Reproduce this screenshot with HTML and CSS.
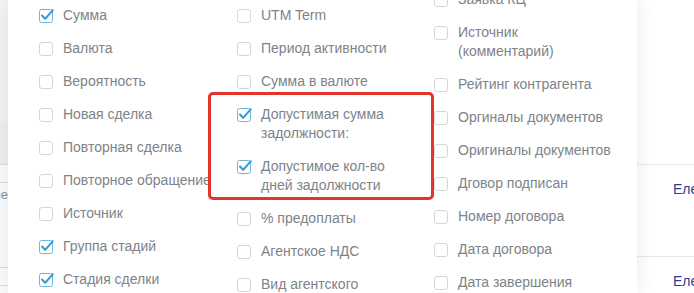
FILE: index.html
```html
<!DOCTYPE html>
<html lang="ru">
<head>
    <meta charset="UTF-8">
    <meta name="viewport" content="width=device-width, initial-scale=1.0">
    <title>Поля сделки</title>
    <link rel="stylesheet" href="styles.css">
</head>
<body>
    <div class="page">
        <div class="side-left">
            <div class="sl-head"></div>
            <div class="sl-band"></div>
            <div class="sl-row short"></div>
            <div class="sl-row tall"><span class="cut">ние</span></div>
            <div class="sl-row short"></div>
        </div>

        <div class="popup">
            <div class="col">
                <label class="item"><svg class="box" viewBox="0 0 14 14"><rect x="0.5" y="0.5" width="13" height="13" rx="2"/><path d="M3 6.5 L6.2 9.8 L13.8 1.2"/></svg><span class="label">Сумма</span></label>
                <label class="item"><span class="box empty"></span><span class="label">Валюта</span></label>
                <label class="item"><span class="box empty"></span><span class="label">Вероятность</span></label>
                <label class="item"><span class="box empty"></span><span class="label">Новая сделка</span></label>
                <label class="item"><span class="box empty"></span><span class="label">Повторная сделка</span></label>
                <label class="item"><span class="box empty"></span><span class="label wide">Повторное обращение</span></label>
                <label class="item"><span class="box empty"></span><span class="label">Источник</span></label>
                <label class="item"><svg class="box" viewBox="0 0 14 14"><rect x="0.5" y="0.5" width="13" height="13" rx="2"/><path d="M3 6.5 L6.2 9.8 L13.8 1.2"/></svg><span class="label">Группа стадий</span></label>
                <label class="item"><svg class="box" viewBox="0 0 14 14"><rect x="0.5" y="0.5" width="13" height="13" rx="2"/><path d="M3 6.5 L6.2 9.8 L13.8 1.2"/></svg><span class="label">Стадия сделки</span></label>
            </div>
            <div class="col">
                <label class="item"><span class="box empty"></span><span class="label">UTM Term</span></label>
                <label class="item"><span class="box empty"></span><span class="label">Период активности</span></label>
                <label class="item"><span class="box empty"></span><span class="label">Сумма в валюте</span></label>
                <label class="item"><svg class="box" viewBox="0 0 14 14"><rect x="0.5" y="0.5" width="13" height="13" rx="2"/><path d="M3 6.5 L6.2 9.8 L13.8 1.2"/></svg><span class="label">Допустимая сумма задолжности:</span></label>
                <label class="item"><svg class="box" viewBox="0 0 14 14"><rect x="0.5" y="0.5" width="13" height="13" rx="2"/><path d="M3 6.5 L6.2 9.8 L13.8 1.2"/></svg><span class="label">Допустимое кол-во дней задолжности</span></label>
                <label class="item"><span class="box empty"></span><span class="label">% предоплаты</span></label>
                <label class="item"><span class="box empty"></span><span class="label">Агентское НДС</span></label>
                <label class="item"><span class="box empty"></span><span class="label">Вид агентского</span></label>
            </div>
            <div class="col shifted">
                <label class="item"><span class="box empty"></span><span class="label">Заявка КЦ</span></label>
                <label class="item"><span class="box empty"></span><span class="label">Источник (комментарий)</span></label>
                <label class="item"><span class="box empty"></span><span class="label">Рейтинг контрагента</span></label>
                <label class="item"><span class="box empty"></span><span class="label">Оргиналы документов</span></label>
                <label class="item"><span class="box empty"></span><span class="label">Оригиналы документов</span></label>
                <label class="item"><span class="box empty"></span><span class="label">Дговор подписан</span></label>
                <label class="item"><span class="box empty"></span><span class="label">Номер договора</span></label>
                <label class="item"><span class="box empty"></span><span class="label">Дата договора</span></label>
                <label class="item"><span class="box empty"></span><span class="label">Дата завершения</span></label>
            </div>

            <!-- выделение двух новых полей -->
            <div class="highlight"></div>
        </div>

        <div class="side-right">
            <div class="sr-head"></div>
            <div class="sr-row"><span class="link">Елена</span></div>
            <div class="sr-row"><span class="link">Елена</span></div>
        </div>
    </div>
</body>
</html>
```

FILE: styles.css
```css
body {
    margin: 0;
    font-family: 'Liberation Sans', Arial, sans-serif;
    font-size: 14px;
    background: #ffffff;
}
.page {
    display: flex;
    width: 694px;
    height: 293px;
    overflow: hidden;
}

/* таблица за попапом слева */
.side-left {
    width: 8px;
    flex: none;
    overflow: hidden;
    background: #fbfbfc;
}
.sl-head {
    height: 121px;
    background: #f3f4f5;
}
.sl-band {
    height: 43px;
    background: #eeeff1;
    border-bottom: 1px solid #dcdfe3;
}
.sl-row {
    border-bottom: 1px solid #dcdfe3;
    box-sizing: border-box;
}
.sl-row.short {
    height: 18px;
}
.sl-row.tall {
    height: 85px;
    padding-top: 4px;
    position: relative;
}
.cut {
    display: block;
    width: 8px;
    direction: rtl;
    overflow: hidden;
    white-space: nowrap;
    color: #8a8f95;
    font-size: 13px;
    line-height: 16px;
}

/* попап с полями */
.popup {
    width: 629px;
    flex: none;
    position: relative;
    z-index: 1;
    background: #ffffff;
    box-shadow: 0 0 18px rgba(40, 50, 70, 0.10);
    padding: 6px 0 0 31px;
    box-sizing: border-box;
    display: grid;
    grid-template-columns: 198px 197px 1fr;
    align-items: start;
}
.col.shifted {
    margin-top: -16px;
}
.item {
    display: flex;
    gap: 10px;
    margin-bottom: 14px;
    line-height: 19px;
    color: #7e8389;
}
.label {
    max-width: 155px;
}
.label.wide {
    max-width: none;
    white-space: nowrap;
}
.box {
    width: 14px;
    height: 14px;
    flex: none;
    margin-top: 3px;
    box-sizing: border-box;
    overflow: visible;
}
.box.empty {
    border: 1px solid #d2d6db;
    border-radius: 3px;
    background: #ffffff;
}
.box rect {
    fill: #ffffff;
    stroke: #6fb6da;
}
.box path {
    fill: none;
    stroke: #2f9bd0;
    stroke-width: 2;
    stroke-linecap: round;
    stroke-linejoin: round;
}
.highlight {
    position: absolute;
    left: 200px;
    top: 92px;
    width: 226px;
    height: 108px;
    border: 3px solid #e2332c;
    border-radius: 5px;
    box-sizing: border-box;
}

/* таблица за попапом справа */
.side-right {
    flex: 1;
    overflow: hidden;
    background: #ffffff;
}
.sr-head {
    height: 164px;
    border-bottom: 1px solid #e5e8ec;
}
.sr-row {
    height: 92px;
    border-bottom: 1px solid #e5e8ec;
    padding: 15px 0 0 36px;
    box-sizing: border-box;
    white-space: nowrap;
}
.link {
    color: #2b3f8f;
    line-height: 19px;
}
```
